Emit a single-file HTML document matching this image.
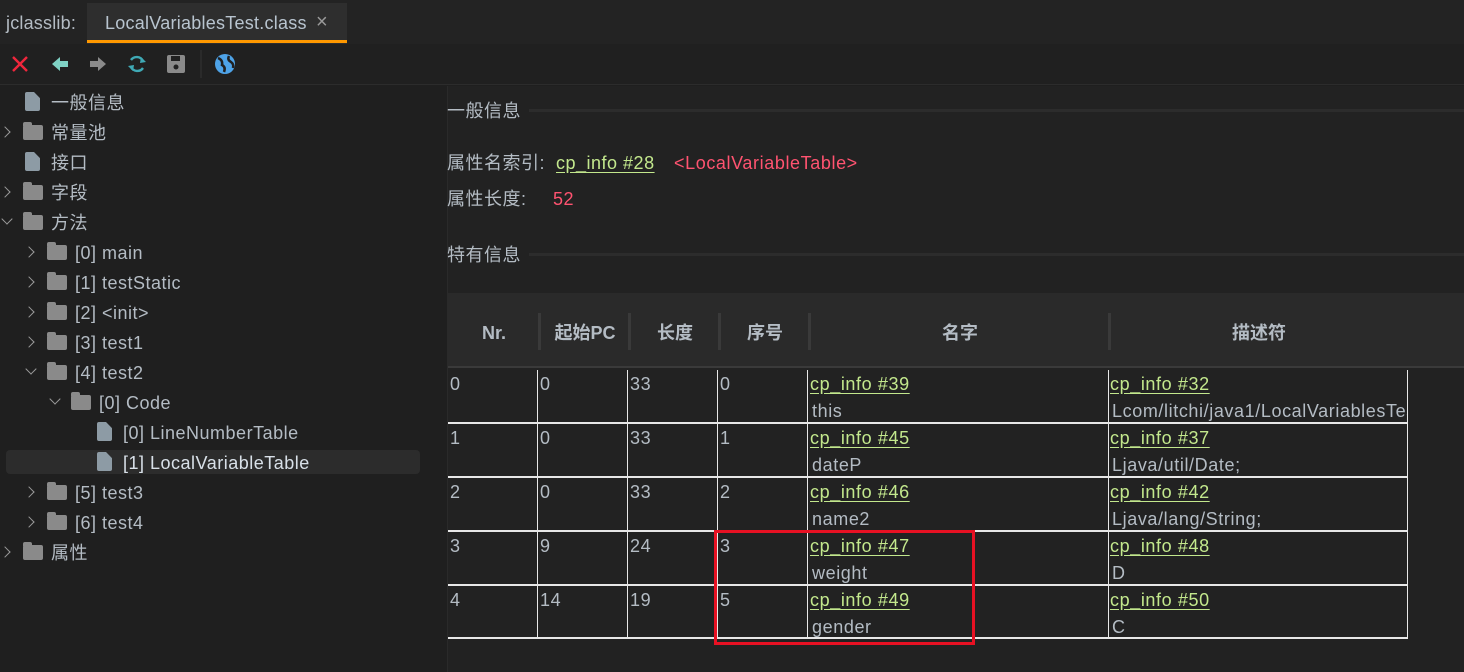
<!DOCTYPE html>
<html><head><meta charset="utf-8"><style>
*{margin:0;padding:0;box-sizing:border-box}
body{width:1464px;height:672px;background:#1f1f1f;font-family:"Liberation Sans","Noto Sans CJK SC",sans-serif;color:#b4bcc4;overflow:hidden;position:relative}
.a{position:absolute;white-space:nowrap}
.t{font-size:18px;line-height:20px;letter-spacing:0.5px}
.lnk{color:#c3e88d;text-decoration:underline;text-underline-offset:3px}
.red{color:#ff5370}
.hl{position:absolute;height:2px;background:#e8e8e8}
.vl{position:absolute;width:1px;background:#e8e8e8}
.c{font-size:18px;line-height:22px;position:absolute;white-space:nowrap;letter-spacing:0.6px}
.th{position:absolute;top:322px;font-size:18px;line-height:22px;font-weight:bold;color:#b4bcc4;text-align:center}
.sep{position:absolute;top:313px;width:3px;height:37px;background:#3a3a3a}
.chev{position:absolute;width:8px;height:8px;border-right:1.5px solid #9a9a9a;border-bottom:1.5px solid #9a9a9a}
.r{transform:rotate(-45deg)}
.d{transform:rotate(45deg)}
.fold{position:absolute;width:20px;height:15px;background:#8a8a8a;border-radius:2px}
.fold:before{content:"";position:absolute;left:0;top:-3px;width:9px;height:4px;background:#8a8a8a;border-radius:2px 2px 0 0}
.file{position:absolute;width:15px;height:19px;background:#8d9ba5;border-radius:2px;clip-path:polygon(0 0,60% 0,100% 32%,100% 100%,0 100%)}
</style></head><body>
<div class="a" style="left:0;top:0;width:1464px;height:44px;background:#232323"></div>
<div class="a t" style="left:6px;top:13px;letter-spacing:0.2px">jclasslib:</div>
<div class="a" style="left:87px;top:3px;width:260px;height:41px;background:#2e2e2e"></div>
<div class="a" style="left:87px;top:40px;width:260px;height:3px;background:#ff9800"></div>
<div class="a t" style="left:105px;top:13px;color:#b8c4cf;letter-spacing:0.25px">LocalVariablesTest.class</div>
<div class="a" style="left:316px;top:11px;font-size:20px;color:#9a9a9a">×</div>
<div class="a" style="left:0;top:44px;width:1464px;height:41px;background:#202020;border-bottom:1px solid #2c2c2c"></div>
<svg class="a" style="left:0;top:48px" width="250" height="32">
<path d="M13 9 L27 23 M27 9 L13 23" stroke="#f0263c" stroke-width="2.4"/>
<path d="M52 16 L60 9 V13 H68 V19 H60 V23 Z" fill="#7fd1c4"/>
<path d="M106 16 L98 9 V13 H90 V19 H98 V23 Z" fill="#8a8a8a"/>
<path d="M131 12 A7 7 0 0 1 143 13 M143 20 A7 7 0 0 1 131 19" stroke="#3fa9b5" stroke-width="2.4" fill="none"/>
<path d="M141 9 L146 14 L140 15Z M133 23 L128 18 L134 17Z" fill="#3fa9b5"/>
<rect x="167" y="7" width="18" height="18" rx="2" fill="#8a8a8a"/><rect x="171" y="8" width="9" height="5" fill="#202020"/><circle cx="176" cy="19" r="2.5" fill="#202020"/>
<rect x="200" y="2" width="2" height="28" fill="#2a2a2a"/>
<circle cx="225" cy="16" r="10" fill="#4ea3e8"/><path d="M218 10 Q223 12 222 17 Q226 19 224 24 M229 8 Q227 12 231 14 Q234 16 233 20" stroke="#202020" stroke-width="2.5" fill="none"/>
</svg>
<div class="a" style="left:447px;top:86px;width:1017px;height:586px;background:#222;border-left:1px solid #2a2a2a"></div>
<div class="a" style="left:6px;top:450px;width:414px;height:24px;background:#2c2c2c;border-radius:4px"></div>
<div class="file" style="left:25px;top:92px"></div><div class="a t" style="left:51px;top:93px">一般信息</div>
<div class="chev r" style="left:1px;top:128px"></div><div class="fold" style="left:23px;top:125px"></div><div class="a t" style="left:51px;top:123px">常量池</div>
<div class="file" style="left:25px;top:152px"></div><div class="a t" style="left:51px;top:153px">接口</div>
<div class="chev r" style="left:1px;top:188px"></div><div class="fold" style="left:23px;top:185px"></div><div class="a t" style="left:51px;top:183px">字段</div>
<div class="chev d" style="left:3px;top:215px"></div><div class="fold" style="left:23px;top:215px"></div><div class="a t" style="left:51px;top:213px">方法</div>
<div class="chev r" style="left:25px;top:248px"></div><div class="fold" style="left:47px;top:245px"></div><div class="a t" style="left:75px;top:243px">[0] main</div>
<div class="chev r" style="left:25px;top:278px"></div><div class="fold" style="left:47px;top:275px"></div><div class="a t" style="left:75px;top:273px">[1] testStatic</div>
<div class="chev r" style="left:25px;top:308px"></div><div class="fold" style="left:47px;top:305px"></div><div class="a t" style="left:75px;top:303px">[2] &lt;init&gt;</div>
<div class="chev r" style="left:25px;top:338px"></div><div class="fold" style="left:47px;top:335px"></div><div class="a t" style="left:75px;top:333px">[3] test1</div>
<div class="chev d" style="left:27px;top:365px"></div><div class="fold" style="left:47px;top:365px"></div><div class="a t" style="left:75px;top:363px">[4] test2</div>
<div class="chev d" style="left:51px;top:395px"></div><div class="fold" style="left:71px;top:395px"></div><div class="a t" style="left:99px;top:393px">[0] Code</div>
<div class="file" style="left:97px;top:422px"></div><div class="a t" style="left:123px;top:423px">[0] LineNumberTable</div>
<div class="file" style="left:97px;top:452px"></div><div class="a t" style="left:123px;top:453px;color:#d8e0e8">[1] LocalVariableTable</div>
<div class="chev r" style="left:25px;top:488px"></div><div class="fold" style="left:47px;top:485px"></div><div class="a t" style="left:75px;top:483px">[5] test3</div>
<div class="chev r" style="left:25px;top:518px"></div><div class="fold" style="left:47px;top:515px"></div><div class="a t" style="left:75px;top:513px">[6] test4</div>
<div class="chev r" style="left:1px;top:548px"></div><div class="fold" style="left:23px;top:545px"></div><div class="a t" style="left:51px;top:543px">属性</div>
<div class="a t" style="left:447px;top:101px">一般信息</div>
<div class="a" style="left:529px;top:109px;width:935px;height:3px;background:#2c2c2c"></div>
<div class="a t" style="left:447px;top:153px">属性名索引:</div>
<div class="a t lnk" style="left:556px;top:153px">cp_info #28</div>
<div class="a t red" style="left:674px;top:153px;letter-spacing:0.6px">&lt;LocalVariableTable&gt;</div>
<div class="a t" style="left:447px;top:189px">属性长度:</div>
<div class="a t red" style="left:553px;top:189px">52</div>
<div class="a t" style="left:447px;top:245px">特有信息</div>
<div class="a" style="left:529px;top:253px;width:935px;height:3px;background:#2c2c2c"></div>
<div class="a" style="left:448px;top:293px;width:1016px;height:75px;background:#2a2a2a;border-bottom:2px solid #3a3a3a"></div>
<div class="th" style="left:448px;width:92px">Nr.</div>
<div class="sep" style="left:538px"></div><div class="th" style="left:540px;width:90px">起始PC</div>
<div class="sep" style="left:628px"></div><div class="th" style="left:630px;width:90px">长度</div>
<div class="sep" style="left:718px"></div><div class="th" style="left:720px;width:90px">序号</div>
<div class="sep" style="left:808px"></div><div class="th" style="left:810px;width:300px">名字</div>
<div class="sep" style="left:1108px"></div><div class="th" style="left:1110px;width:298px">描述符</div>
<div class="vl" style="left:537px;top:370px;height:269px"></div>
<div class="vl" style="left:627px;top:370px;height:269px"></div>
<div class="vl" style="left:717px;top:370px;height:269px"></div>
<div class="vl" style="left:807px;top:370px;height:269px"></div>
<div class="vl" style="left:1108px;top:370px;height:269px"></div>
<div class="vl" style="left:1407px;top:370px;height:269px"></div>
<div class="hl" style="left:448px;top:422px;width:960px"></div>
<div class="hl" style="left:448px;top:476px;width:960px"></div>
<div class="hl" style="left:448px;top:530px;width:960px"></div>
<div class="hl" style="left:448px;top:584px;width:960px"></div>
<div class="hl" style="left:448px;top:637px;width:960px"></div>
<div style="position:absolute;left:1110px;top:370px;width:297px;height:270px;overflow:hidden">
<div class="c lnk" style="left:0;top:3px">cp_info #32</div><div class="c" style="left:2px;top:30px">Lcom/litchi/java1/LocalVariablesTest;</div>
<div class="c lnk" style="left:0;top:57px">cp_info #37</div><div class="c" style="left:2px;top:84px">Ljava/util/Date;</div>
<div class="c lnk" style="left:0;top:111px">cp_info #42</div><div class="c" style="left:2px;top:138px">Ljava/lang/String;</div>
<div class="c lnk" style="left:0;top:165px">cp_info #48</div><div class="c" style="left:2px;top:192px">D</div>
<div class="c lnk" style="left:0;top:219px">cp_info #50</div><div class="c" style="left:2px;top:246px">C</div>
</div>
<div class="c" style="left:450px;top:373px">0</div><div class="c" style="left:540px;top:373px">0</div><div class="c" style="left:630px;top:373px">33</div><div class="c" style="left:720px;top:373px">0</div>
<div class="c lnk" style="left:810px;top:373px">cp_info #39</div><div class="c" style="left:812px;top:400px">this</div>
<div class="c" style="left:450px;top:427px">1</div><div class="c" style="left:540px;top:427px">0</div><div class="c" style="left:630px;top:427px">33</div><div class="c" style="left:720px;top:427px">1</div>
<div class="c lnk" style="left:810px;top:427px">cp_info #45</div><div class="c" style="left:812px;top:454px">dateP</div>
<div class="c" style="left:450px;top:481px">2</div><div class="c" style="left:540px;top:481px">0</div><div class="c" style="left:630px;top:481px">33</div><div class="c" style="left:720px;top:481px">2</div>
<div class="c lnk" style="left:810px;top:481px">cp_info #46</div><div class="c" style="left:812px;top:508px">name2</div>
<div class="c" style="left:450px;top:535px">3</div><div class="c" style="left:540px;top:535px">9</div><div class="c" style="left:630px;top:535px">24</div><div class="c" style="left:720px;top:535px">3</div>
<div class="c lnk" style="left:810px;top:535px">cp_info #47</div><div class="c" style="left:812px;top:562px">weight</div>
<div class="c" style="left:450px;top:589px">4</div><div class="c" style="left:540px;top:589px">14</div><div class="c" style="left:630px;top:589px">19</div><div class="c" style="left:720px;top:589px">5</div>
<div class="c lnk" style="left:810px;top:589px">cp_info #49</div><div class="c" style="left:812px;top:616px">gender</div>
<div class="a" style="left:714px;top:530px;width:261px;height:115px;border:3px solid #e81123"></div>
</body></html>
